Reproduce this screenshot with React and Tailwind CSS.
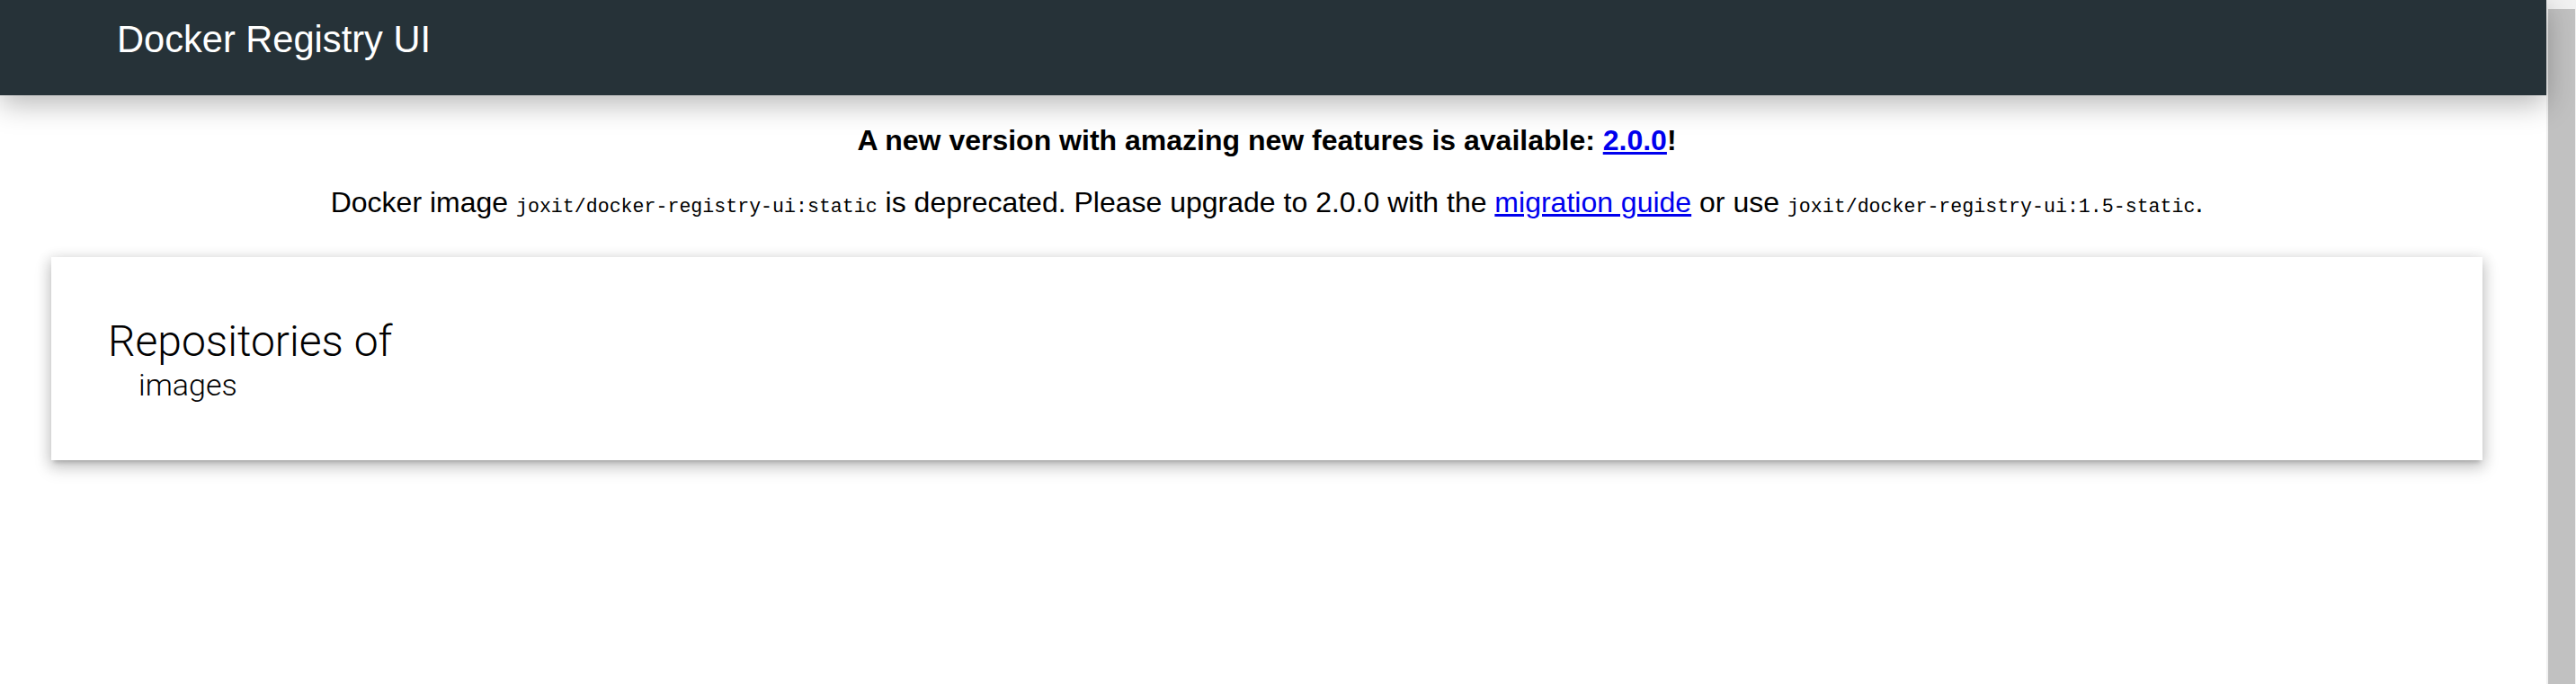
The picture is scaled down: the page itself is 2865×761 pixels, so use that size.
export default function App() {
  const mono = "font-['Liberation_Mono',monospace] text-[21.6px] leading-none";

  return (
    <div className="flex h-screen overflow-hidden bg-white font-['Liberation_Sans',Arial,sans-serif] text-black">
      <div className="flex-1 min-w-0">
        {/* Header */}
        <header className="relative z-10 h-[106px] bg-[#263238] pl-[130px] pt-[20px] shadow-[0_10px_30px_rgba(0,0,0,0.28)]">
          <h1 className="text-[41.6px] leading-[48px] text-white">Docker Registry UI</h1>
        </header>

        {/* Notices */}
        <div className="pr-[14px]">
          <p className="mt-[32px] text-center text-[32px] font-bold leading-[37px]">
            A new version with amazing new features is available:{' '}
            <a href="#" className="text-[#0000ee] underline">2.0.0</a>!
          </p>
          <p className="mt-[32px] text-center text-[32px] leading-[37px]">
            Docker image <code className={mono}>joxit/docker-registry-ui:static</code> is deprecated. Please upgrade to
            2.0.0 with the <a href="#" className="text-[#0000ee] underline">migration guide</a> or use{' '}
            <code className={mono}>joxit/docker-registry-ui:1.5-static</code>.
          </p>
        </div>

        {/* Repositories card */}
        <div className="mt-[42px] ml-[57px] mr-[71px] h-[226px] bg-white pt-[66px] pl-[63px] font-['Roboto',sans-serif] shadow-[0_8px_17px_2px_rgba(0,0,0,0.14),0_3px_14px_2px_rgba(0,0,0,0.12),0_5px_5px_-3px_rgba(0,0,0,0.2)]">
          <h2 className="text-[48px] font-light leading-[56px]">Repositories of</h2>
          <div className="ml-[34px] text-[34px] font-light leading-[40px] text-black">images</div>
        </div>
      </div>

      {/* Scrollbar */}
      <div className="w-[33px] shrink-0 bg-[#f1f1f1] pt-[10px] pl-[2px] pr-[1px]">
        <div className="h-full bg-[#c1c1c1]" />
      </div>
    </div>
  );
}
